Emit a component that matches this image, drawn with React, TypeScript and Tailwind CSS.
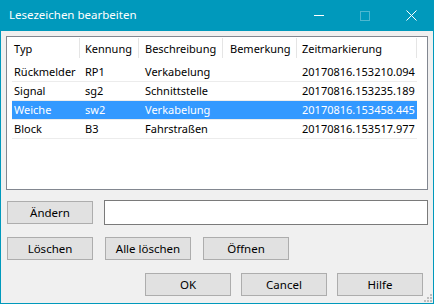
import React from "react";

type Row = {
  typ: string;
  kennung: string;
  beschreibung: string;
  bemerkung: string;
  zeit: string;
  selected?: boolean;
};

const rows: Row[] = [
  { typ: "Rückmelder", kennung: "RP1", beschreibung: "Verkabelung", bemerkung: "", zeit: "20170816.153210.094" },
  { typ: "Signal", kennung: "sg2", beschreibung: "Schnittstelle", bemerkung: "", zeit: "20170816.153235.189" },
  { typ: "Weiche", kennung: "sw2", beschreibung: "Verkabelung", bemerkung: "", zeit: "20170816.153458.445", selected: true },
  { typ: "Block", kennung: "B3", beschreibung: "Fahrstraßen", bemerkung: "", zeit: "20170816.153517.977" },
];

const Button = ({ label }: { label: string }) => (
  <button className="w-[86px] h-[23px] bg-[#e1e1e1] border border-[#adadad] text-[11.5px] text-black flex items-center justify-center leading-none">
    {label}
  </button>
);

const App = () => {
  return (
    <div className="w-[434px] h-[304px] flex flex-col bg-[#0099bc] font-['Noto_Sans',sans-serif] overflow-hidden">
      {/* title bar */}
      <div className="h-[31px] flex items-center shrink-0 text-white">
        <span className="ml-[9px] text-[11.5px] leading-none pb-[1px]">Lesezeichen bearbeiten</span>
        <div className="ml-auto flex items-center h-full">
          <div className="w-[46px] h-full flex items-center justify-center">
            <div className="w-[10px] h-[1px] bg-white" />
          </div>
          <div className="w-[46px] h-full flex items-center justify-center">
            <div className="w-[10px] h-[10px] border border-[#4db8d0]" />
          </div>
          <div className="w-[46px] h-full flex items-center justify-center">
            <svg width="11" height="11" viewBox="0 0 11 11">
              <path d="M0.5 0.5 L10.5 10.5 M10.5 0.5 L0.5 10.5" stroke="white" strokeWidth="1" />
            </svg>
          </div>
        </div>
      </div>

      {/* body */}
      <div className="relative flex-1 mx-[1px] mb-[1px] bg-[#f0f0f0] pl-[5px] pt-[5px] flex flex-col">
        {/* list view */}
        <div className="w-[422px] h-[154px] bg-white border border-[#828790] text-[11px] text-black">
          <div className="flex h-[26px] pl-[5px] items-start">
            {["Typ", "Kennung", "Beschreibung", "Bemerkung", "Zeitmarkierung"].map((h, i) => (
              <div
                key={h}
                className={`mt-[1px] h-[20px] pt-[2px] flex items-center border-r border-[#e5e5e5] ${
                  i === 0
                    ? "w-[68px] pl-[2px]"
                    : i === 1
                    ? "w-[59px] pl-[5px]"
                    : i === 2
                    ? "w-[84px] pl-[6px]"
                    : i === 3
                    ? "w-[74px] pl-[7px]"
                    : "w-[120px] pl-[5px]"
                }`}
              >
                {h}
              </div>
            ))}
          </div>
          {rows.map((r) => (
            <div key={r.typ} className="ml-[5px] w-[405px] h-[19px] border-b border-[#ececec]">
              <div
                className={`flex h-[18px] items-center ${
                  r.selected ? "bg-[#3399ff] text-white" : ""
                }`}
              >
                <div className="w-[68px] pl-[2px] whitespace-nowrap">{r.typ}</div>
                <div className="w-[59px] pl-[5px] whitespace-nowrap">{r.kennung}</div>
                <div className="w-[84px] pl-[6px] whitespace-nowrap">{r.beschreibung}</div>
                <div className="w-[74px] pl-[7px] whitespace-nowrap">{r.bemerkung}</div>
                <div className="w-[120px] pl-[5px] whitespace-nowrap">{r.zeit}</div>
              </div>
            </div>
          ))}
        </div>

        {/* edit row */}
        <div className="mt-[10px] flex items-center h-[25px] pl-[1px]">
          <Button label="Ändern" />
          <input
            className="ml-[11px] w-[324px] h-[25px] bg-white border border-[#7a7a7a] outline-none"
            defaultValue=""
          />
        </div>

        {/* delete / open row */}
        <div className="mt-[12px] flex gap-[12px] pl-[1px]">
          <Button label="Löschen" />
          <Button label="Alle löschen" />
          <Button label="Öffnen" />
        </div>

        {/* dialog buttons */}
        <div className="mt-[13px] flex gap-[10px] pl-[139px]">
          <Button label="OK" />
          <Button label="Cancel" />
          <Button label="Hilfe" />
        </div>

        {/* size grip */}
        <div className="absolute right-[1px] bottom-[1px] w-[8px] h-[8px]">
          <div className="absolute right-0 top-0 w-[2px] h-[2px] bg-[#bdbdbd]" />
          <div className="absolute right-0 top-[3px] w-[2px] h-[2px] bg-[#bdbdbd]" />
          <div className="absolute right-[3px] top-[3px] w-[2px] h-[2px] bg-[#bdbdbd]" />
          <div className="absolute right-0 top-[6px] w-[2px] h-[2px] bg-[#bdbdbd]" />
          <div className="absolute right-[3px] top-[6px] w-[2px] h-[2px] bg-[#bdbdbd]" />
          <div className="absolute right-[6px] top-[6px] w-[2px] h-[2px] bg-[#bdbdbd]" />
        </div>
      </div>
    </div>
  );
};

export default App;
